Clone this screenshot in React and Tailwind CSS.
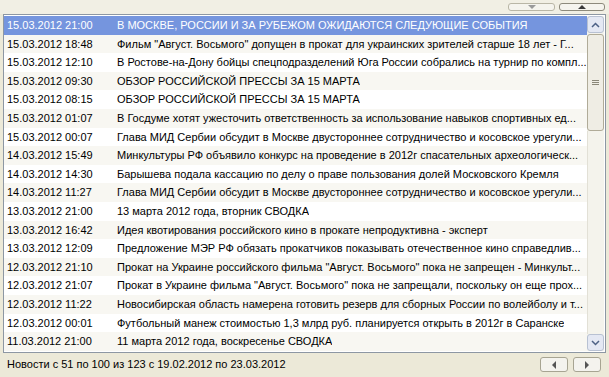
import React from 'react';

const rows = [
  ['15.03.2012 21:00', 'В МОСКВЕ, РОССИИ И ЗА РУБЕЖОМ ОЖИДАЮТСЯ СЛЕДУЮЩИЕ СОБЫТИЯ'],
  ['15.03.2012 18:48', 'Фильм "Август. Восьмого" допущен в прокат для украинских зрителей старше 18 лет - Г...'],
  ['15.03.2012 12:10', 'В Ростове-на-Дону бойцы спецподразделений Юга России собрались на турнир по компл...'],
  ['15.03.2012 09:30', 'ОБЗОР РОССИЙСКОЙ ПРЕССЫ ЗА 15 МАРТА'],
  ['15.03.2012 08:15', 'ОБЗОР РОССИЙСКОЙ ПРЕССЫ ЗА 15 МАРТА'],
  ['15.03.2012 01:07', 'В Госдуме хотят ужесточить ответственность за использование навыков спортивных ед...'],
  ['15.03.2012 00:07', 'Глава МИД Сербии обсудит в Москве двустороннее сотрудничество и косовское урегули...'],
  ['14.03.2012 15:49', 'Минкультуры РФ объявило конкурс на проведение в 2012г спасательных археологическ...'],
  ['14.03.2012 14:30', 'Барышева подала кассацию по делу о праве пользования долей Московского Кремля'],
  ['14.03.2012 11:27', 'Глава МИД Сербии обсудит в Москве двустороннее сотрудничество и косовское урегули...'],
  ['13.03.2012 21:00', '13 марта 2012 года, вторник СВОДКА'],
  ['13.03.2012 16:42', 'Идея квотирования российского кино в прокате непродуктивна - эксперт'],
  ['13.03.2012 12:09', 'Предложение МЭР РФ обязать прокатчиков показывать отечественное кино справедлив...'],
  ['12.03.2012 21:10', 'Прокат на Украине российского фильма "Август. Восьмого" пока не запрещен - Минкульт...'],
  ['12.03.2012 21:07', 'Прокат в Украине фильма "Август. Восьмого" пока не запрещали, поскольку он еще прох...'],
  ['12.03.2012 11:22', 'Новосибирская область намерена готовить резерв для сборных России по волейболу и т...'],
  ['12.03.2012 00:01', 'Футбольный манеж стоимостью 1,3 млрд руб. планируется открыть в 2012г в Саранске'],
  ['11.03.2012 21:00', '11 марта 2012 года, воскресенье СВОДКА'],
];

function Tri({ dir, color = '#4d4d4d' }) {
  const pts = {
    up: '0,4 4,0 8,4',
    down: '0,0 8,0 4,4',
    left: '4,0 4,8 0,4',
    right: '0,0 0,8 4,4',
  }[dir];
  const w = dir === 'up' || dir === 'down' ? 8 : 4;
  const h = dir === 'up' || dir === 'down' ? 4 : 8;
  return (
    <svg width={w} height={h} viewBox={`0 0 ${w} ${h}`}>
      <polygon points={pts} fill={color} />
    </svg>
  );
}

function Chevron({ dir }) {
  return (
    <svg width="9" height="6" viewBox="0 0 9 6">
      <polyline
        points={dir === 'up' ? '1,5 4.5,1.5 8,5' : '1,1 4.5,4.5 8,1'}
        fill="none"
        stroke="#4d6185"
        strokeWidth="1.5"
      />
    </svg>
  );
}

export default function App() {
  return (
    <div
      className="w-[609px] h-[377px] bg-[#ece9d8] flex flex-col overflow-hidden text-[11px] text-black"
      style={{ fontFamily: '"Liberation Sans", Arial, sans-serif' }}
    >
      <div className="h-[14px] flex justify-end items-center gap-[4px] pr-[4px] bg-[#f1efe4]">
        <div className="w-[47px] h-[8px] rounded-[3px] border border-[#b9b6a6] bg-[#f5f4ee] flex items-center justify-center">
          <Tri dir="down" color="#9a9a9a" />
        </div>
        <div className="w-[46px] h-[8px] rounded-[3px] border border-[#8d8a7c] bg-[#f5f4ee] flex items-center justify-center">
          <Tri dir="up" color="#3a3a3a" />
        </div>
      </div>

      <div className="mx-[3px] h-[339px] border border-[#8d97a3] bg-white flex">
        <div className="flex-1 min-w-0 pt-[1px]">
          {rows.map(([time, title], i) => (
            <div
              key={i}
              className={
                'h-[18.6px] flex items-center whitespace-nowrap overflow-hidden ' +
                (i === 0 ? 'bg-[#7595de] text-white' : i % 2 === 1 ? 'bg-[#f8f7f2]' : 'bg-white')
              }
            >
              <span className="w-[113px] shrink-0 pl-[3px]">{time}</span>
              <span className="overflow-hidden">{title}</span>
            </div>
          ))}
        </div>
        <div className="w-[17px] shrink-0 mr-[1px] my-[1px] bg-[#f4f3ec] flex flex-col">
          <div className="h-[17px] rounded-[3px] border border-[#b8c1d2] bg-[#e4e8f3] flex items-center justify-center">
            <Chevron dir="up" />
          </div>
          <div className="h-[97px] mt-[1px] rounded-[3px] border border-[#b0ab98] bg-[#efede4] flex items-center justify-center">
            <div className="flex flex-col gap-[1px]">
              <div className="w-[7px] h-[1px] bg-[#8a8778]" />
              <div className="w-[7px] h-[1px] bg-[#8a8778]" />
              <div className="w-[7px] h-[1px] bg-[#8a8778]" />
            </div>
          </div>
          <div className="flex-1 border-l border-[#e2e0d6]" />
          <div className="h-[17px] rounded-[3px] border border-[#b8c1d2] bg-[#e4e8f3] flex items-center justify-center">
            <Chevron dir="down" />
          </div>
        </div>
      </div>

      <div className="flex-1 flex items-center justify-between pl-[7px] pr-[8px] pb-[1px]">
        <span>Новости с 51 по 100 из 123 с 19.02.2012 по 23.03.2012</span>
        <div className="flex gap-[5px]">
          <div className="w-[28px] h-[15px] rounded-[3px] border border-[#a7a492] bg-[#f4f3ee] flex items-center justify-center">
            <Tri dir="left" color="#555" />
          </div>
          <div className="w-[28px] h-[15px] rounded-[3px] border border-[#a7a492] bg-[#f4f3ee] flex items-center justify-center">
            <Tri dir="right" color="#555" />
          </div>
        </div>
      </div>
    </div>
  );
}
